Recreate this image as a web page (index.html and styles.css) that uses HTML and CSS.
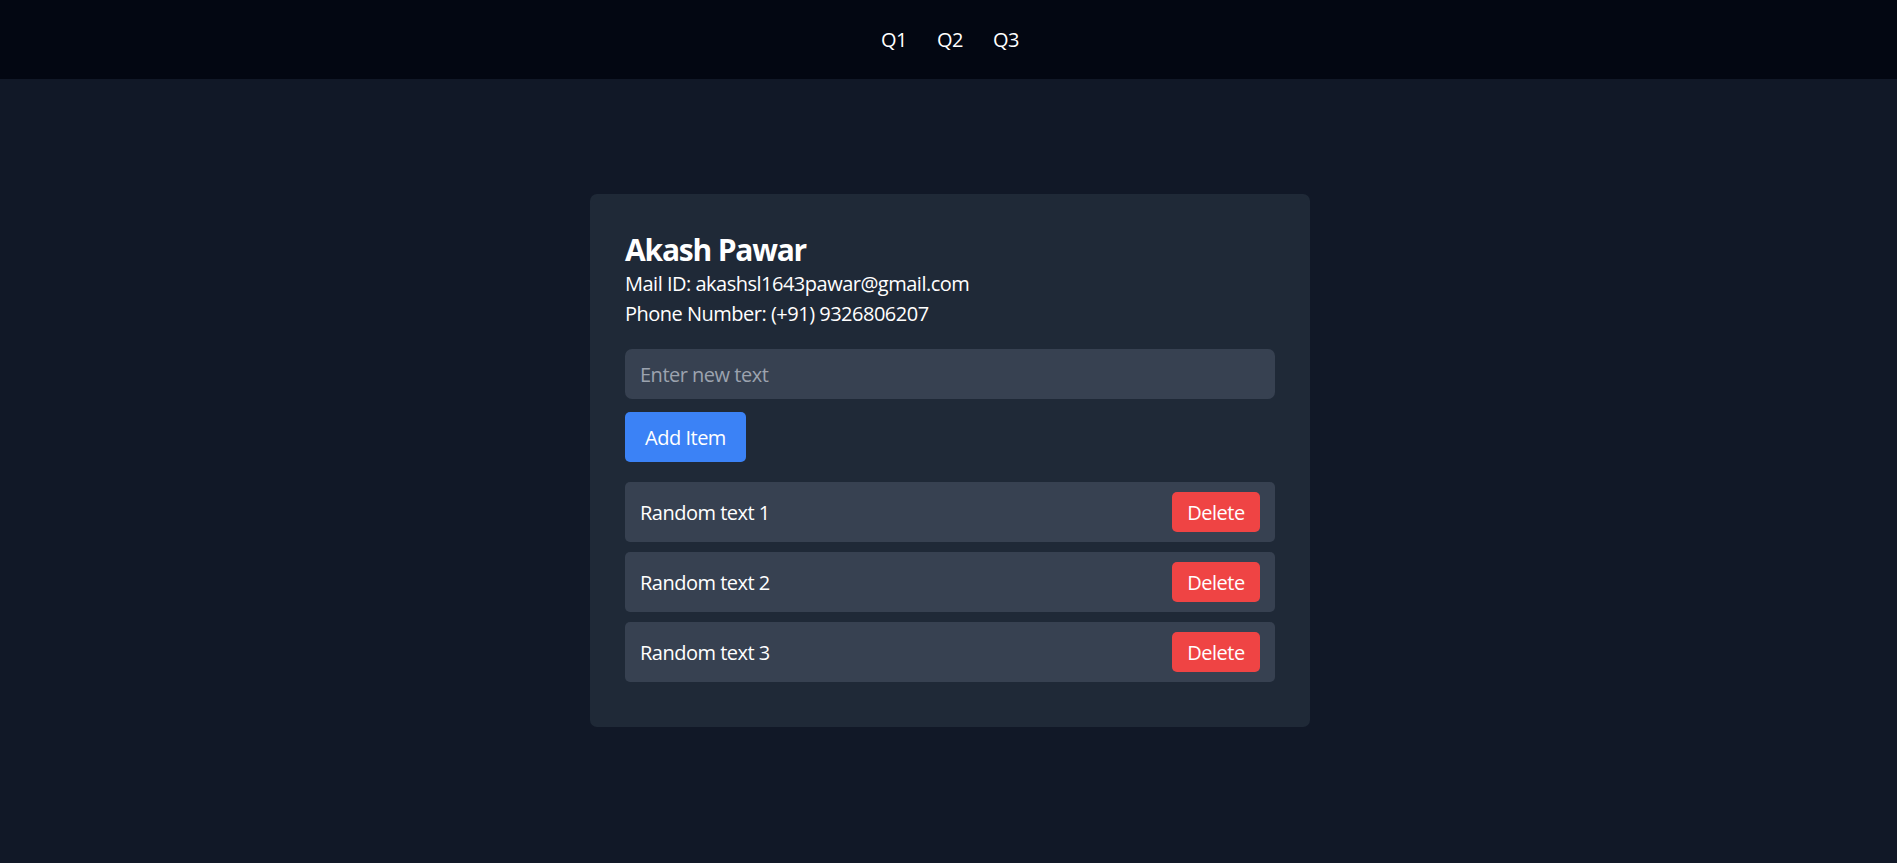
FILE: index.html
```html
<!DOCTYPE html>
<html lang="en">
<head>
<meta charset="utf-8">
<title>Akash Pawar</title>
<link rel="stylesheet" href="styles.css">
</head>
<body>
<nav class="nav">
  <a class="nav-link" href="#">Q1</a>
  <a class="nav-link" href="#">Q2</a>
  <a class="nav-link" href="#">Q3</a>
</nav>
<main class="main">
  <section class="card">
    <h1 class="name">Akash Pawar</h1>
    <p class="info">Mail ID: akashsl1643pawar@gmail.com</p>
    <p class="info">Phone Number: (+91) 9326806207</p>
    <input class="text-input" type="text" placeholder="Enter new text">
    <button class="add-btn" type="button">Add Item</button>
    <ul class="list">
      <li class="item"><span class="item-text">Random text 1</span><button class="del-btn" type="button">Delete</button></li>
      <li class="item"><span class="item-text">Random text 2</span><button class="del-btn" type="button">Delete</button></li>
      <li class="item"><span class="item-text">Random text 3</span><button class="del-btn" type="button">Delete</button></li>
    </ul>
  </section>
</main>
</body>
</html>
```

FILE: styles.css
```css
* { box-sizing: border-box; }
html, body {
  margin: 0;
  padding: 0;
  background: #111827;
  color: #ffffff;
  font-family: "Open Sans", "Noto Sans", sans-serif;
  font-size: 20px;
  line-height: 30px;
  letter-spacing: -0.5px;
}
.nav {
  height: 79px;
  background: #030712;
  display: flex;
  justify-content: center;
  align-items: center;
  gap: 30px;
  padding-left: 3px;
}
.nav-link {
  color: #ffffff;
  text-decoration: none;
  font-size: 20px;
}
.main {
  display: flex;
  justify-content: center;
  padding-top: 115px;
  padding-left: 3px;
}
.card {
  width: 720px;
  background: #1f2937;
  border-radius: 7px;
  padding: 35px;
  display: flex;
  flex-direction: column;
}
.name {
  margin: 0;
  padding-top: 2px;
  font-size: 30px;
  line-height: 38px;
  font-weight: 700;
  letter-spacing: -1.2px;
}
.info {
  margin: 0;
  font-size: 20px;
  line-height: 30px;
}
.text-input {
  margin-top: 20px;
  height: 50px;
  width: 100%;
  border: none;
  outline: none;
  border-radius: 7px;
  background: #374151;
  color: #ffffff;
  padding: 0 15px;
  font-family: inherit;
  font-size: 20px;
  letter-spacing: -0.5px;
}
.text-input::placeholder { color: #9ca3af; }
.add-btn {
  align-self: flex-start;
  margin-top: 12.5px;
  height: 50px;
  width: 121px;
  padding: 1px 0 0;
  border: none;
  border-radius: 5px;
  background: #3b82f6;
  color: #ffffff;
  font-family: inherit;
  font-size: 20px;
  letter-spacing: -0.5px;
}
.list {
  list-style: none;
  margin: 20px 0 10px;
  padding: 0;
  display: flex;
  flex-direction: column;
  gap: 10px;
}
.item {
  height: 60px;
  background: #374151;
  border-radius: 5px;
  padding: 10px 15px;
  display: flex;
  align-items: center;
  justify-content: space-between;
}
.item-text {
  font-size: 20px;
  padding-top: 2px;
}
.del-btn {
  height: 40px;
  width: 88px;
  border: none;
  border-radius: 5px;
  background: #ef4444;
  color: #ffffff;
  font-family: inherit;
  font-size: 20px;
  letter-spacing: -0.5px;
  padding: 2px 0 0;
}
```
